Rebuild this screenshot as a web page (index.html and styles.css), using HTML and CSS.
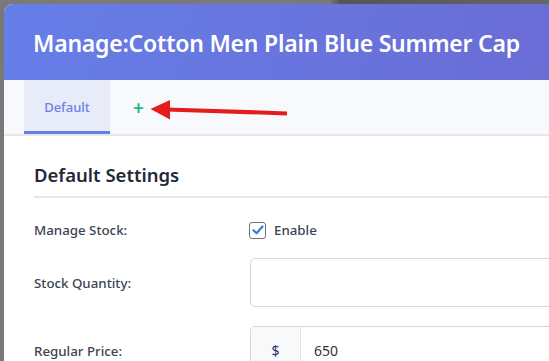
FILE: index.html
```html
<!DOCTYPE html>
<html lang="en">
<head>
    <meta charset="UTF-8">
    <meta name="viewport" content="width=device-width, initial-scale=1.0">
    <title>Manage Product</title>
    <link rel="stylesheet" href="styles.css">
</head>
<body>
    <div class="backdrop"></div>
    <div class="modal">
        <div class="modal-header">
            <h1>Manage:Cotton Men Plain Blue Summer Cap</h1>
        </div>

        <div class="tabs">
            <a href="#" class="tab active">Default</a>
            <a href="#" class="tab-add">+</a>
            <!-- annotation arrow -->
            <svg class="arrow" width="150" height="30" viewBox="0 0 150 30">
                <line x1="18" y1="13.4" x2="139" y2="17.4" stroke="#e41c1c" stroke-width="4"/>
                <polygon points="2.5,13 22,4 22,23.5" fill="#e41c1c"/>
            </svg>
        </div>

        <div class="content">
            <h2>Default Settings</h2>

            <div class="row">
                <label class="label">Manage Stock:</label>
                <label class="check">
                    <span class="box">
                        <svg width="12" height="10" viewBox="0 0 12 10"><path d="M1.5 5.2 L4.6 8.2 L10.5 1.5" fill="none" stroke="#2f7fd6" stroke-width="2.2" stroke-linecap="round" stroke-linejoin="round"/></svg>
                    </span>
                    Enable
                </label>
            </div>

            <div class="row">
                <label class="label">Stock Quantity:</label>
                <div class="input"></div>
            </div>

            <div class="row">
                <label class="label">Regular Price:</label>
                <div class="input group">
                    <span class="addon">$</span>
                    <span class="value">650</span>
                </div>
            </div>
        </div>
    </div>
</body>
</html>
```

FILE: styles.css
```css
body {
    font-family: "Noto Sans", "Open Sans", Arial, sans-serif;
    margin: 0;
    padding: 0;
    background-color: #777877;
    overflow: hidden;
    height: 361px;
}

.backdrop {
    height: 4px;
    background: linear-gradient(90deg, #7a7a7a 0%, #7a7a7a 60%, #555 62%, #666 100%);
}

.modal {
    margin-left: 4px;
    width: 620px;
    background-color: #ffffff;
    border-radius: 9px 9px 0 0;
    overflow: hidden;
    height: 400px;
}

.modal-header {
    height: 76px;
    padding: 0 29px;
    display: flex;
    align-items: center;
    background: linear-gradient(100deg, #667ee8 0%, #6b6ad2 100%);
}

.modal-header h1 {
    margin: 0;
    padding-top: 2px;
    color: white;
    font-size: 23px;
    font-weight: 600;
    letter-spacing: -0.22px;
}

.tabs {
    position: relative;
    height: 54px;
    background-color: #f8f9fc;
    border-bottom: 2px solid #e6e7ec;
    display: flex;
    align-items: stretch;
    padding-left: 20px;
}

.tab {
    width: 86px;
    display: flex;
    align-items: center;
    justify-content: center;
    font-size: 13px;
    font-weight: 500;
    color: #6c80e8;
    text-decoration: none;
    background-color: #e8ebf8;
    border-bottom: 3px solid #667ee8;
    box-sizing: border-box;
    padding-top: 3px;
}

.tab-add {
    margin-left: 23px;
    display: flex;
    align-items: center;
    padding-top: 2px;
    font-size: 19px;
    font-weight: 600;
    color: #19b87a;
    text-decoration: none;
}

.arrow {
    position: absolute;
    left: 144px;
    top: 16px;
}

.content {
    padding: 0 29px 0 30px;
}

h2 {
    margin: 0;
    padding: 26px 0 9px;
    font-size: 18.5px;
    font-weight: 600;
    color: #1f2a37;
    border-bottom: 2px solid #e5e7eb;
}

.row {
    display: flex;
    align-items: center;
    margin-top: 19px;
}

.row:first-of-type {
    margin-top: 23px;
}

.label {
    width: 216px;
    font-size: 13.3px;
    font-weight: 500;
    color: #3c4452;
}

.check {
    display: flex;
    align-items: center;
    font-size: 13.3px;
    font-weight: 500;
    color: #3c4452;
    gap: 8px;
    margin-left: -1px;
}

.box {
    width: 15px;
    height: 15px;
    border: 1px solid #6b7280;
    border-radius: 3px;
    display: flex;
    align-items: center;
    justify-content: center;
    background: #fff;
}

.input {
    flex-grow: 1;
    height: 47px;
    border: 1px solid #d4d6dc;
    border-radius: 5px;
    background: #fff;
}

.group {
    display: flex;
    align-items: center;
    overflow: hidden;
}

.addon {
    width: 49px;
    height: 100%;
    background-color: #f8f9fa;
    border-right: 1px solid #e3e5e8;
    display: flex;
    align-items: center;
    justify-content: center;
    font-size: 14px;
    color: #2b2f6b;
}

.value {
    padding-left: 13px;
    font-size: 14px;
    color: #333;
}
```
